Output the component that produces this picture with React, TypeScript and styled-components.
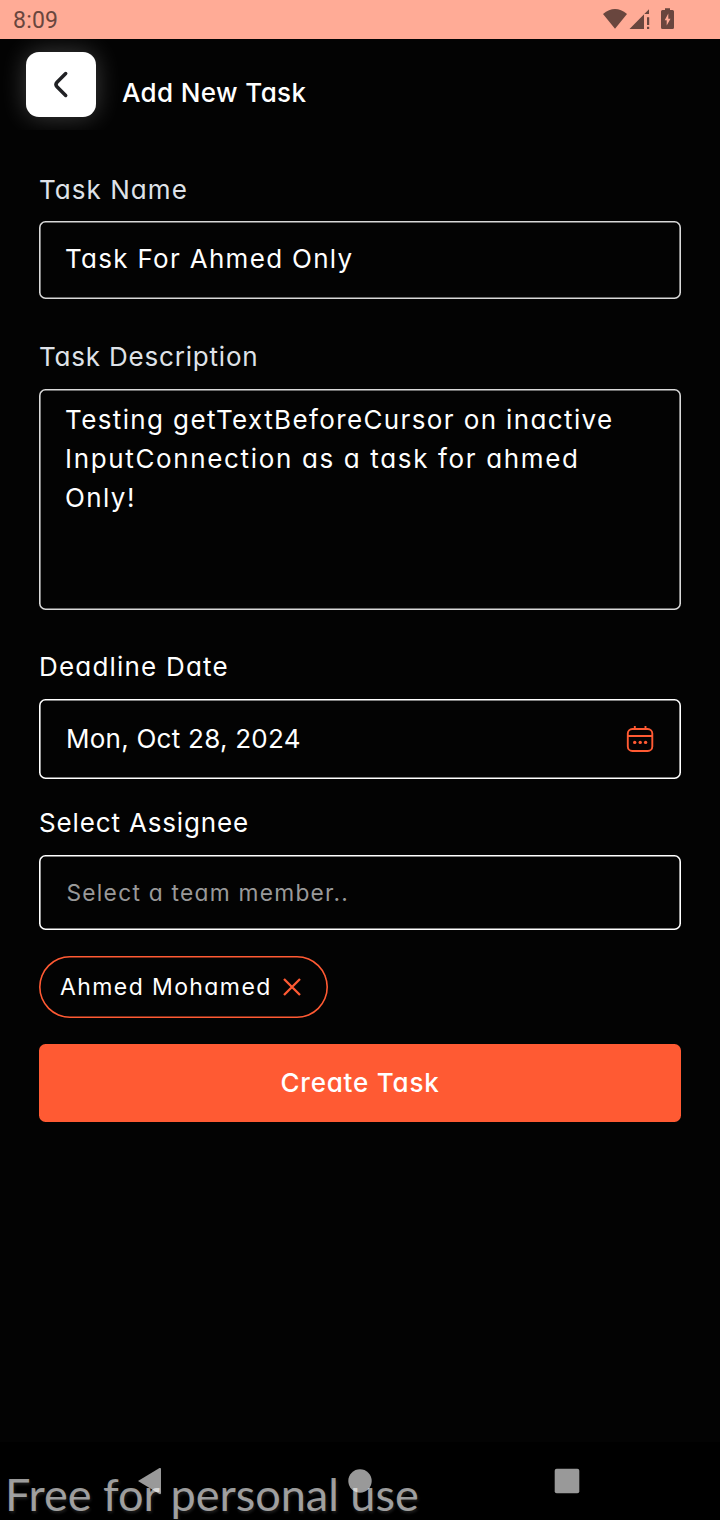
import React from "react";
import styled, { createGlobalStyle } from "styled-components";

const GlobalStyle = createGlobalStyle`
  * { box-sizing: border-box; }
  body { margin: 0; background: #030303; }
`;

const Screen = styled.div`
  position: relative;
  display: flex;
  flex-direction: column;
  width: 720px;
  height: 1520px;
  overflow: hidden;
  background: #030303;
  color: #fff;
  font-family: Inter, "Open Sans", sans-serif;
  font-feature-settings: "cv11", "calt" 0;
  font-size: 26px;
  line-height: 39px;
  white-space: nowrap;
`;

const StatusBar = styled.div`
  display: flex;
  justify-content: space-between;
  height: 39px;
  padding: 0 45px 0 13px;
  background: #ffab96;
  color: #69463e;
  font-family: Roboto, sans-serif;
  font-size: 23px;
  line-height: 41px;
  letter-spacing: 0.2px;
`;

const Header = styled.header`
  display: flex;
  height: 91px;
  padding: 13px 26px 0;
  overflow: hidden;
`;

const BackButton = styled.div`
  display: flex;
  width: 70px;
  height: 65px;
  border-radius: 13px;
  background: #fff;
  box-shadow: 0 0 26px rgba(255, 255, 255, 0.24);
`;

const Title = styled.h1<{ $spacing: number }>`
  margin: 21px 0 0 26px;
  font-size: 26px;
  font-weight: 500;
  line-height: 39px;
  letter-spacing: ${(p) => p.$spacing}px;
`;

const Form = styled.main`
  display: flex;
  flex-direction: column;
  align-items: flex-start;
  padding: 40px 39px 0;
`;

const Label = styled.div<{ $spacing: number; $muted?: boolean }>`
  color: ${(p) => (p.$muted ? "#dfe2e8" : "#fff")};
  letter-spacing: ${(p) => p.$spacing}px;
`;

const Field = styled.div<{ $height: number; $top: number; $offset: number; $gap: number; $line?: string }>`
  display: flex;
  justify-content: space-between;
  width: 642px;
  height: ${(p) => p.$height}px;
  margin: ${(p) => p.$offset}px 0 ${(p) => p.$gap}px;
  padding: ${(p) => p.$top}px 27px 0 26px;
  border-radius: 6.5px;
  box-shadow: inset 0 0 0 1.6px ${(p) => p.$line || "#fff"};
`;

const Value = styled.div<{ $spacing: number; $indent?: number }>`
  padding-left: ${(p) => p.$indent || 0}px;
  letter-spacing: ${(p) => p.$spacing}px;
`;

const TextLine = styled.div<{ $spacing: number }>`
  letter-spacing: ${(p) => p.$spacing}px;
`;

const CalendarIcon = styled.svg`
  margin-top: 6px;
`;

const Placeholder = styled.div`
  padding-left: 1.5px;
  color: #999;
  font-size: 22.75px;
  line-height: 34px;
  letter-spacing: 1.25px;
`;

const Chip = styled.div`
  display: flex;
  align-items: center;
  gap: 11.5px;
  width: 289px;
  height: 62px;
  padding: 0 26px 0 21px;
  border-radius: 31px;
  box-shadow: inset 0 0 0 1.6px #ff5a33;
  font-size: 23px;
  letter-spacing: 1.4px;
`;

const SubmitButton = styled.div`
  width: 642px;
  height: 78px;
  margin-top: 26px;
  border-radius: 6.5px;
  background: #ff5a33;
  font-weight: 500;
  line-height: 78px;
  text-align: center;
  letter-spacing: 0.8px;
`;

const NavBar = styled.nav`
  display: flex;
  height: 78px;
  margin-top: auto;
  background: #000;
`;

const Watermark = styled.div`
  position: absolute;
  left: 5px;
  top: 1468px;
  color: rgba(255, 255, 255, 0.6);
  font-family: Lato, sans-serif;
  font-size: 45px;
  line-height: 52px;
  text-shadow: 1px 2px 3px rgba(255, 255, 255, 0.12);
`;

export default function App() {
  return (
    <Screen>
      <GlobalStyle />
      <StatusBar>
        <span>8:09</span>
        <svg width="74" height="39" viewBox="601 0 74 39" fill="#69463e">
          <path d="M603 14 Q615 4 627 14 L615 28.700Z" />
          <path d="M629.500 29 L649 9.300 V14 H644 V29Z" />
          <path d="M647 17.300 H649.200 V25 H647Z M647 26.700 H649.200 V29 H647Z" />
          <path
            fillRule="evenodd"
            d="M665 8.300 H670 V10 H672.500 Q674 10 674 11.500 V27.500 Q674 29 672.500 29 H662.500 Q661 29 661 27.500 V11.500 Q661 10 662.500 10 H665Z M668.300 13.500 L664.700 20.300 H666.700 V25.500 L670.500 18.700 H668.300Z"
          />
        </svg>
      </StatusBar>

      <Header>
        <BackButton>
          <svg width="70" height="65" viewBox="0 0 70 65" fill="none" stroke="#202124" strokeWidth="3.5" strokeLinecap="round">
            <path d="M39.700 21.500 L31 30.200 Q28.900 32.500 31 34.800 L39.700 43.500" />
          </svg>
        </BackButton>
        <Title $spacing={0.38}>Add New Task</Title>
      </Header>

      <Form>
        <Label $spacing={1.05} $muted>Task Name</Label>
        <Field $height={78} $top={18} $offset={12} $gap={38} $line="#d9d9d9">
          <Value $spacing={1.3}>Task For Ahmed Only</Value>
        </Field>
        <Label $spacing={0.8} $muted>Task Description</Label>
        <Field $height={221} $top={11} $offset={13} $gap={37} $line="#d9d9d9">
          <div>
            <TextLine $spacing={1.38}>Testing getTextBeforeCursor on inactive</TextLine>
            <TextLine $spacing={1.65}>InputConnection as a task for ahmed</TextLine>
            <TextLine $spacing={1.4}>Only!</TextLine>
          </div>
        </Field>
        <Label $spacing={1.2}>Deadline Date</Label>
        <Field $height={79.5} $top={20} $offset={13} $gap={24.5}>
          <Value $spacing={0.25} $indent={1}>Mon, Oct 28, 2024</Value>
          <CalendarIcon width="28" height="28" viewBox="626 725 28 28" fill="none" stroke="#ff5a33" strokeWidth="1.9">
            <rect x="627.800" y="729" width="24.500" height="22" rx="4.500" />
            <path d="M628 736 H652 M634.800 726 V730 M645.500 726 V730" />
            <g fill="#ff5a33" stroke="none">
              <circle cx="634.700" cy="742.400" r="1.700" />
              <circle cx="640.200" cy="742.400" r="1.700" />
              <circle cx="645.600" cy="742.400" r="1.700" />
            </g>
          </CalendarIcon>
        </Field>
        <Label $spacing={0.85}>Select Assignee</Label>
        <Field $height={75} $top={21} $offset={13} $gap={26}>
          <Placeholder>Select a team member..</Placeholder>
        </Field>
        <Chip>
          Ahmed Mohamed
          <svg width="18" height="18" viewBox="0 0 18 18" stroke="#ff5a33" strokeWidth="2.3">
            <path d="M1 1 L17 17 M17 1 L1 17" />
          </svg>
        </Chip>
        <SubmitButton>Create Task</SubmitButton>
      </Form>

      <NavBar>
        <svg width="720" height="78" viewBox="0 1442 720 78" fill="#fff" fillOpacity="0.6">
          <path d="M138 1481 L159.500 1468 Q161 1467.500 161 1469 V1493 Q161 1494.500 159.500 1494Z" />
          <circle cx="360" cy="1481" r="11.700" />
          <rect x="554.700" y="1468.700" width="24.600" height="24.600" rx="2" />
        </svg>
      </NavBar>
      <Watermark>Free for personal use</Watermark>
    </Screen>
  );
}
